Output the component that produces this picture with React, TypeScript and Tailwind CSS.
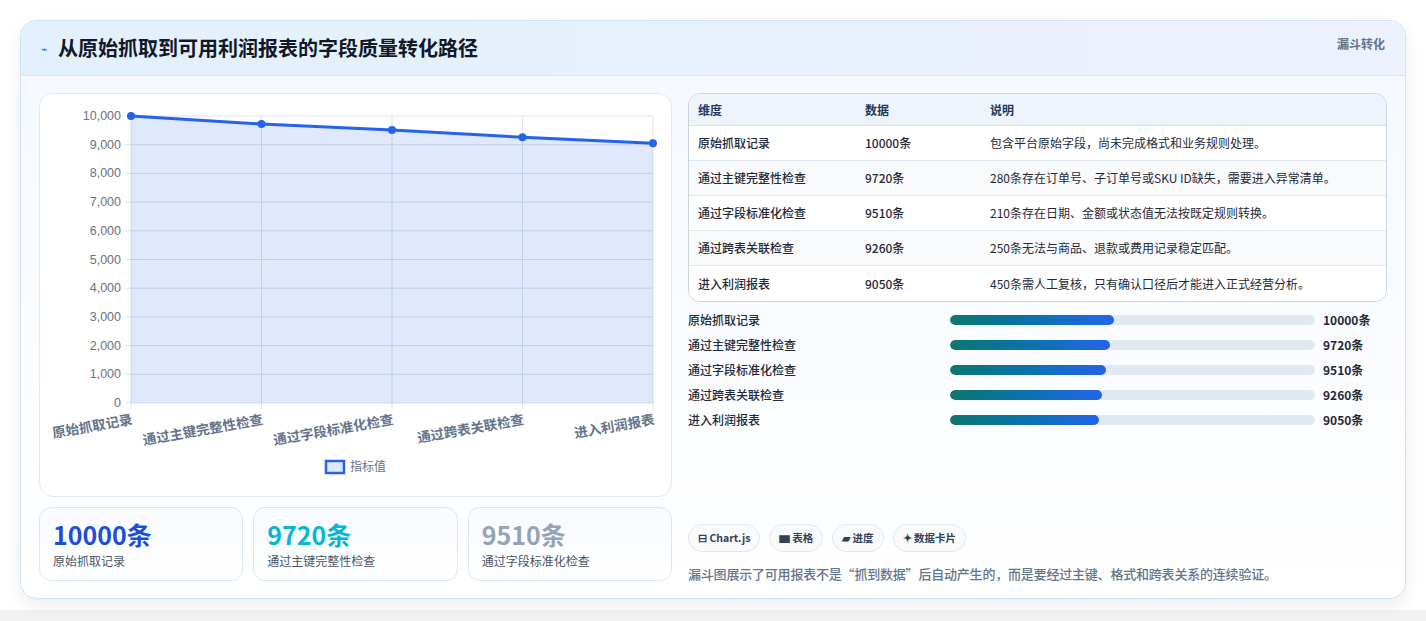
import React from "react";

const rows = [
  ["原始抓取记录", "10000条", "包含平台原始字段，尚未完成格式和业务规则处理。", 10000],
  ["通过主键完整性检查", "9720条", "280条存在订单号、子订单号或SKU ID缺失，需要进入异常清单。", 9720],
  ["通过字段标准化检查", "9510条", "210条存在日期、金额或状态值无法按既定规则转换。", 9510],
  ["通过跨表关联检查", "9260条", "250条无法与商品、退款或费用记录稳定匹配。", 9260],
  ["进入利润报表", "9050条", "450条需人工复核，只有确认口径后才能进入正式经营分析。", 9050],
] as const;

function Chart() {
  const x0 = 91, x1 = 613, yTop = 22, yBot = 309;
  const xs = [0, 1, 2, 3, 4].map((i) => x0 + ((x1 - x0) * i) / 4);
  const ys = rows.map((r) => yBot - ((yBot - yTop) * (r[3] as number)) / 10000);
  const pts = xs.map((x, i) => `${x},${ys[i]}`).join(" ");
  const ticks = Array.from({ length: 11 }, (_, i) => i * 1000);
  return (
    <svg width="632" height="403" className="block" style={{ fontFamily: "'Liberation Sans','Noto Sans CJK SC',sans-serif" }}>
      {ticks.map((t) => {
        const y = yBot - ((yBot - yTop) * t) / 10000;
        return (
          <g key={t}>
            <line x1={x0 - 6} x2={x1} y1={y} y2={y} stroke="#dbe2ee" />
            <text x={x0 - 10} y={y + 4} textAnchor="end" fontSize="12.5" fill="#6b7280">{t.toLocaleString("en-US")}</text>
          </g>
        );
      })}
      {xs.map((x, i) => (
        <line key={i} x1={x} x2={x} y1={yTop} y2={yBot + 6} stroke="#dbe2ee" />
      ))}
      <polygon points={`${x0},${yBot} ${pts} ${x1},${yBot}`} fill="rgba(37,99,235,0.15)" />
      <polyline points={pts} fill="none" stroke="#2563eb" strokeWidth="3" />
      {xs.map((x, i) => (
        <circle key={i} cx={x} cy={ys[i]} r="4" fill="#2563eb" />
      ))}
      {rows.map((r, i) => (
        <text key={i} x={xs[i] + 2} y={yBot + 21} textAnchor="end" fontSize="13.5" fontWeight="600" fill="#64748b"
          transform={`rotate(-10 ${xs[i] + 2} ${yBot + 21})`} style={{ fontFamily: "'Noto Sans CJK SC',sans-serif" }}>
          {r[0]}
        </text>
      ))}
      <rect x="286" y="367" width="18" height="12" fill="rgba(37,99,235,0.15)" stroke="#2563eb" strokeWidth="2.5" />
      <text x="310" y="377" fontSize="12" fill="#64748b" style={{ fontFamily: "'Noto Sans CJK SC',sans-serif" }}>指标值</text>
    </svg>
  );
}

export default function App() {
  return (
    <div className="w-[1426px] h-[621px] bg-[#f1f2f4]" style={{ fontFamily: "'Noto Sans CJK SC','Noto Sans',sans-serif" }}>
      <div className="h-[610px] bg-white pt-[20px] px-[20px]">
        <div className="h-[579px] rounded-[16px] border border-[#cfe3f0] bg-gradient-to-b from-[#f4f9ff] to-white shadow-[0_6px_16px_rgba(15,23,42,0.08)] overflow-hidden">
          <div className="h-[55px] flex items-center justify-between px-[20px] bg-gradient-to-r from-[#e3f0fd] to-[#edf2fd] border-b border-[#d8e8f5]">
            <div className="flex items-center gap-[10px]">
              <span className="text-[11px] text-[#2563eb]">⌁</span>
              <span className="text-[20px] font-bold text-[#111827]">从原始抓取到可用利润报表的字段质量转化路径</span>
            </div>
            <span className="text-[12px] font-bold text-[#64748b] self-start mt-[14px]">漏斗转化</span>
          </div>
          <div className="flex gap-[16px] px-[18px] pt-[17px]">
            <div className="w-[633px] flex flex-col gap-[10px]">
              <div className="h-[404px] rounded-[14px] border border-[#e2e8f0] bg-white overflow-hidden"><Chart /></div>
              <div className="flex gap-[10px]">
                {[["10000条", "text-[#1d4ed8]", "原始抓取记录"], ["9720条", "text-[#06b6d4]", "通过主键完整性检查"], ["9510条", "text-[#94a3b8]", "通过字段标准化检查"]].map(([v, c, l]) => (
                  <div key={v} className="flex-1 h-[74px] rounded-[12px] border border-[#dbe7f5] bg-gradient-to-b from-[#f8fbff] to-white px-[13px] pt-[10px]">
                    <div className={`text-[25px] leading-[32px] font-bold ${c}`}>{v}</div>
                    <div className="text-[12px] text-[#475569] mt-[2px]">{l}</div>
                  </div>
                ))}
              </div>
            </div>
            <div className="flex-1 flex flex-col">
              <div className="rounded-[12px] border border-[#cbd5e1] overflow-hidden bg-white text-[12px]">
                <div className="h-[32px] flex items-center bg-[#eef4fc] font-bold text-[#1e3a5f] border-b border-[#dbe3ee]">
                  <div className="w-[176px] pl-[9px]">维度</div><div className="w-[125px]">数据</div><div>说明</div>
                </div>
                {rows.map((r, i) => (
                  <div key={i} className={`h-[35px] flex items-center text-[#1f2937] ${i < 4 ? "border-b border-[#e2e8f0]" : ""} ${i % 2 ? "bg-[#f8fafc]" : "bg-white"}`}>
                    <div className="w-[176px] pl-[9px] font-medium">{r[0]}</div>
                    <div className="w-[125px] font-medium">{r[1]}</div>
                    <div>{r[2]}</div>
                  </div>
                ))}
              </div>
              <div className="mt-[10px] flex flex-col gap-[9px]">
                {rows.map((r, i) => (
                  <div key={i} className="h-[16px] flex items-center text-[12px] font-medium text-[#1f2937]">
                    <div className="w-[262px]">{r[0]}</div>
                    <div className="w-[365px] h-[10px] rounded-full bg-[#e2e8f0] overflow-hidden">
                      <div className="h-full rounded-full bg-gradient-to-r from-[#0f766e] to-[#2563eb]" style={{ width: `${((r[3] as number) / 10000) * 45}%` }} />
                    </div>
                    <div className="ml-[8px] font-bold">{r[1]}</div>
                  </div>
                ))}
              </div>
              <div className="mt-[96px] flex gap-[9px]">
                {["⊟ Chart.js", "▆ 表格", "▰ 进度", "✦ 数据卡片"].map((t) => (
                  <span key={t} className="h-[28px] px-[9px] flex items-center rounded-full border border-[#e2e8f0] bg-[#f8fafc] text-[10.5px] font-bold text-[#334155]">{t}</span>
                ))}
              </div>
              <div className="mt-[12px] text-[13px] text-[#64748b] font-medium tracking-[-0.2px]">漏斗图展示了可用报表不是“抓到数据”后自动产生的，而是要经过主键、格式和跨表关系的连续验证。</div>
            </div>
          </div>
        </div>
      </div>
    </div>
  );
}
